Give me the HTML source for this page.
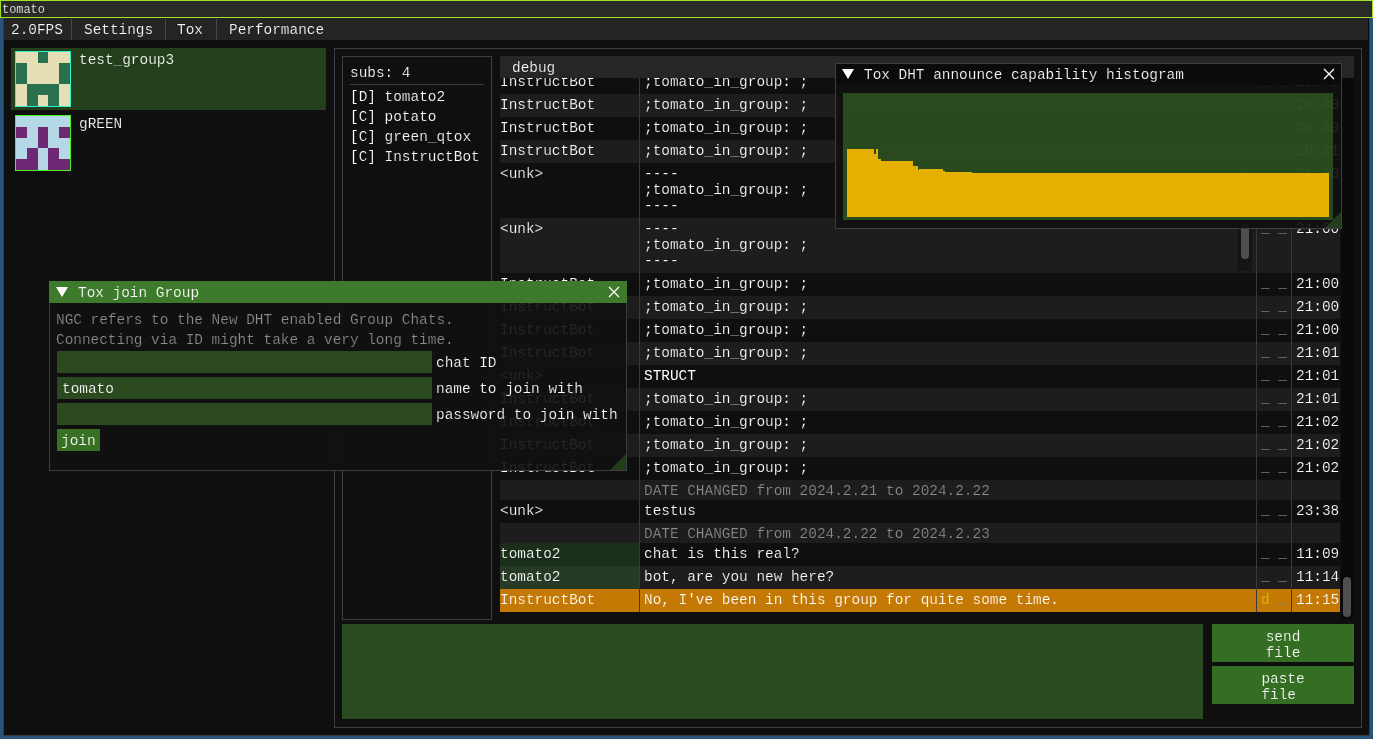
<!DOCTYPE html>
<html><head><meta charset="utf-8"><style>
html,body{margin:0;padding:0}
body{-webkit-font-smoothing:antialiased;width:1373px;height:739px;background:#275478;position:relative;overflow:hidden;font-family:"Liberation Mono",monospace;font-size:14.42px;line-height:16px;color:#ffffff}
.a{position:absolute}
.t{position:absolute;white-space:pre;will-change:transform}
.btn{background:#336e22;display:flex;align-items:center;justify-content:center;text-align:center;line-height:15.8px;box-sizing:border-box;padding-top:5px;will-change:transform}
</style></head><body>
<div class="a" style="left:0;top:0;width:1373px;height:18px;box-sizing:border-box;border:1px solid #9ee22b;background:#2a2a26"></div>
<div class="t" style="left:2px;top:1.5px;font-size:11.9px;line-height:16px;color:#f0f0f0;-webkit-text-stroke:0.16000000000000003px #2a2a26">tomato</div>
<div class="a" style="left:3px;top:18px;width:1367px;height:718px;background:#0f0f0f;box-sizing:border-box;border-left:1px solid #3a3a44;border-bottom:1px solid #3a3a44;border-right:1px solid #3a3a44"></div>
<div class="a" style="left:4px;top:18px;width:1364px;height:22px;background:#242424"></div>
<div class="a" style="left:71px;top:19px;width:1px;height:21px;background:#46464f"></div>
<div class="a" style="left:165px;top:19px;width:1px;height:21px;background:#46464f"></div>
<div class="a" style="left:216px;top:19px;width:1px;height:21px;background:#46464f"></div>
<div class="t" style="left:10.5px;top:21.66px;-webkit-text-stroke:0.2px #242424;">2.0FPS</div>
<div class="t" style="left:83.5px;top:21.66px;-webkit-text-stroke:0.2px #242424;">Settings</div>
<div class="t" style="left:177px;top:21.66px;-webkit-text-stroke:0.2px #242424;">Tox</div>
<div class="t" style="left:228.5px;top:21.66px;-webkit-text-stroke:0.2px #242424;">Performance</div>
<div class="a" style="left:11px;top:48px;width:315px;height:62px;background:#233f1b"></div>
<div class="a" style="left:15px;top:51px;width:54px;height:54px;border:1px solid #2ff0cc;background:#e6dfb3"></div>
<div class="a" style="left:38px;top:52px;width:10px;height:11px;background:#29704f"></div>
<div class="a" style="left:16px;top:63px;width:11px;height:11px;background:#29704f"></div>
<div class="a" style="left:59px;top:63px;width:11px;height:11px;background:#29704f"></div>
<div class="a" style="left:16px;top:74px;width:11px;height:10px;background:#29704f"></div>
<div class="a" style="left:59px;top:74px;width:11px;height:10px;background:#29704f"></div>
<div class="a" style="left:27px;top:84px;width:11px;height:11px;background:#29704f"></div>
<div class="a" style="left:38px;top:84px;width:10px;height:11px;background:#29704f"></div>
<div class="a" style="left:48px;top:84px;width:11px;height:11px;background:#29704f"></div>
<div class="a" style="left:27px;top:95px;width:11px;height:11px;background:#29704f"></div>
<div class="a" style="left:48px;top:95px;width:11px;height:11px;background:#29704f"></div>
<div class="a" style="left:15px;top:115px;width:54px;height:54px;border:1px solid #4ff01f;background:#b4d8e6"></div>
<div class="a" style="left:16px;top:127px;width:11px;height:11px;background:#6e2873"></div>
<div class="a" style="left:38px;top:127px;width:10px;height:11px;background:#6e2873"></div>
<div class="a" style="left:59px;top:127px;width:11px;height:11px;background:#6e2873"></div>
<div class="a" style="left:38px;top:138px;width:10px;height:10px;background:#6e2873"></div>
<div class="a" style="left:27px;top:148px;width:11px;height:11px;background:#6e2873"></div>
<div class="a" style="left:48px;top:148px;width:11px;height:11px;background:#6e2873"></div>
<div class="a" style="left:16px;top:159px;width:11px;height:11px;background:#6e2873"></div>
<div class="a" style="left:27px;top:159px;width:11px;height:11px;background:#6e2873"></div>
<div class="a" style="left:48px;top:159px;width:11px;height:11px;background:#6e2873"></div>
<div class="a" style="left:59px;top:159px;width:11px;height:11px;background:#6e2873"></div>
<div class="t" style="left:79.2px;top:52.16px;-webkit-text-stroke:0.2px #233f1b;">test_group3</div>
<div class="t" style="left:79px;top:116.16px;-webkit-text-stroke:0.2px #0f0f0f;">gREEN</div>
<div class="a" style="left:334px;top:48px;width:1026px;height:678px;border:1px solid #3d3d45"></div>
<div class="a" style="left:342px;top:56px;width:148px;height:562px;border:1px solid #3d3d45"></div>
<div class="t" style="left:350px;top:65.46px;-webkit-text-stroke:0.2px #0f0f0f;">subs: 4</div>
<div class="a" style="left:350px;top:84px;width:134px;height:1px;background:#3d3d45"></div>
<div class="t" style="left:350px;top:88.96px;-webkit-text-stroke:0.2px #0f0f0f;">[D] tomato2</div>
<div class="t" style="left:350px;top:108.96px;-webkit-text-stroke:0.2px #0f0f0f;">[C] potato</div>
<div class="t" style="left:350px;top:128.96px;-webkit-text-stroke:0.2px #0f0f0f;">[C] green_qtox</div>
<div class="t" style="left:350px;top:148.96px;-webkit-text-stroke:0.2px #0f0f0f;">[C] InstructBot</div>
<div class="a" style="left:500px;top:78px;width:841px;height:541px;overflow:hidden">
<div class="t" style="left:0px;top:-3.54px;-webkit-text-stroke:0.2px #0f0f0f;">InstructBot</div>
<div class="t" style="left:144px;top:-3.54px;-webkit-text-stroke:0.2px #0f0f0f;">;tomato_in_group: ;</div>
<div class="t" style="left:760.5px;top:-4.54px;color:#808080;">_ _</div>
<div class="t" style="left:795.5px;top:-3.54px;-webkit-text-stroke:0.2px #0f0f0f;">20:40</div>
<div class="a" style="left:0px;top:16px;width:840px;height:23px;background:#1d1d1d"></div>
<div class="t" style="left:0px;top:19.46px;-webkit-text-stroke:0.2px #1d1d1d;">InstructBot</div>
<div class="t" style="left:144px;top:19.46px;-webkit-text-stroke:0.2px #1d1d1d;">;tomato_in_group: ;</div>
<div class="t" style="left:760.5px;top:18.46px;color:#808080;">_ _</div>
<div class="t" style="left:795.5px;top:19.46px;-webkit-text-stroke:0.2px #1d1d1d;">20:40</div>
<div class="t" style="left:0px;top:42.46px;-webkit-text-stroke:0.2px #0f0f0f;">InstructBot</div>
<div class="t" style="left:144px;top:42.46px;-webkit-text-stroke:0.2px #0f0f0f;">;tomato_in_group: ;</div>
<div class="t" style="left:760.5px;top:41.46px;color:#808080;">_ _</div>
<div class="t" style="left:795.5px;top:42.46px;-webkit-text-stroke:0.2px #0f0f0f;">20:40</div>
<div class="a" style="left:0px;top:62px;width:840px;height:23px;background:#1d1d1d"></div>
<div class="t" style="left:0px;top:65.46px;-webkit-text-stroke:0.2px #1d1d1d;">InstructBot</div>
<div class="t" style="left:144px;top:65.46px;-webkit-text-stroke:0.2px #1d1d1d;">;tomato_in_group: ;</div>
<div class="t" style="left:760.5px;top:64.46px;color:#808080;">_ _</div>
<div class="t" style="left:795.5px;top:65.46px;-webkit-text-stroke:0.2px #1d1d1d;">20:41</div>
<div class="t" style="left:0px;top:88.46px;-webkit-text-stroke:0.2px #0f0f0f;">&lt;unk&gt;</div>
<div class="t" style="left:144px;top:88.46px;-webkit-text-stroke:0.2px #0f0f0f;">----</div>
<div class="t" style="left:144px;top:104.46px;-webkit-text-stroke:0.2px #0f0f0f;">;tomato_in_group: ;</div>
<div class="t" style="left:144px;top:120.46px;-webkit-text-stroke:0.2px #0f0f0f;">----</div>
<div class="t" style="left:760.5px;top:87.46px;color:#808080;">_ _</div>
<div class="t" style="left:795.5px;top:88.46px;-webkit-text-stroke:0.2px #0f0f0f;">21:00</div>
<div class="a" style="left:0px;top:140px;width:840px;height:55px;background:#1d1d1d"></div>
<div class="t" style="left:0px;top:143.46px;-webkit-text-stroke:0.2px #1d1d1d;">&lt;unk&gt;</div>
<div class="t" style="left:144px;top:143.46px;-webkit-text-stroke:0.2px #1d1d1d;">----</div>
<div class="t" style="left:144px;top:159.46px;-webkit-text-stroke:0.2px #1d1d1d;">;tomato_in_group: ;</div>
<div class="t" style="left:144px;top:175.46px;-webkit-text-stroke:0.2px #1d1d1d;">----</div>
<div class="t" style="left:760.5px;top:142.46px;color:#808080;">_ _</div>
<div class="t" style="left:795.5px;top:143.46px;-webkit-text-stroke:0.2px #1d1d1d;">21:00</div>
<div class="t" style="left:0px;top:198.46px;-webkit-text-stroke:0.2px #0f0f0f;">InstructBot</div>
<div class="t" style="left:144px;top:198.46px;-webkit-text-stroke:0.2px #0f0f0f;">;tomato_in_group: ;</div>
<div class="t" style="left:760.5px;top:197.46px;color:#808080;">_ _</div>
<div class="t" style="left:795.5px;top:198.46px;-webkit-text-stroke:0.2px #0f0f0f;">21:00</div>
<div class="a" style="left:0px;top:218px;width:840px;height:23px;background:#1d1d1d"></div>
<div class="t" style="left:0px;top:221.46px;-webkit-text-stroke:0.2px #1d1d1d;">InstructBot</div>
<div class="t" style="left:144px;top:221.46px;-webkit-text-stroke:0.2px #1d1d1d;">;tomato_in_group: ;</div>
<div class="t" style="left:760.5px;top:220.46px;color:#808080;">_ _</div>
<div class="t" style="left:795.5px;top:221.46px;-webkit-text-stroke:0.2px #1d1d1d;">21:00</div>
<div class="t" style="left:0px;top:244.46px;-webkit-text-stroke:0.2px #0f0f0f;">InstructBot</div>
<div class="t" style="left:144px;top:244.46px;-webkit-text-stroke:0.2px #0f0f0f;">;tomato_in_group: ;</div>
<div class="t" style="left:760.5px;top:243.46px;color:#808080;">_ _</div>
<div class="t" style="left:795.5px;top:244.46px;-webkit-text-stroke:0.2px #0f0f0f;">21:00</div>
<div class="a" style="left:0px;top:264px;width:840px;height:23px;background:#1d1d1d"></div>
<div class="t" style="left:0px;top:267.46px;-webkit-text-stroke:0.2px #1d1d1d;">InstructBot</div>
<div class="t" style="left:144px;top:267.46px;-webkit-text-stroke:0.2px #1d1d1d;">;tomato_in_group: ;</div>
<div class="t" style="left:760.5px;top:266.46px;color:#808080;">_ _</div>
<div class="t" style="left:795.5px;top:267.46px;-webkit-text-stroke:0.2px #1d1d1d;">21:01</div>
<div class="t" style="left:0px;top:290.46px;-webkit-text-stroke:0.2px #0f0f0f;">&lt;unk&gt;</div>
<div class="t" style="left:144px;top:290.46px;font-family:"Liberation Sans",sans-serif;font-size:14px;">STRUCT</div>
<div class="t" style="left:760.5px;top:289.46px;color:#808080;">_ _</div>
<div class="t" style="left:795.5px;top:290.46px;-webkit-text-stroke:0.2px #0f0f0f;">21:01</div>
<div class="a" style="left:0px;top:310px;width:840px;height:23px;background:#1d1d1d"></div>
<div class="t" style="left:0px;top:313.46px;-webkit-text-stroke:0.2px #1d1d1d;">InstructBot</div>
<div class="t" style="left:144px;top:313.46px;-webkit-text-stroke:0.2px #1d1d1d;">;tomato_in_group: ;</div>
<div class="t" style="left:760.5px;top:312.46px;color:#808080;">_ _</div>
<div class="t" style="left:795.5px;top:313.46px;-webkit-text-stroke:0.2px #1d1d1d;">21:01</div>
<div class="t" style="left:0px;top:336.46px;-webkit-text-stroke:0.2px #0f0f0f;">InstructBot</div>
<div class="t" style="left:144px;top:336.46px;-webkit-text-stroke:0.2px #0f0f0f;">;tomato_in_group: ;</div>
<div class="t" style="left:760.5px;top:335.46px;color:#808080;">_ _</div>
<div class="t" style="left:795.5px;top:336.46px;-webkit-text-stroke:0.2px #0f0f0f;">21:02</div>
<div class="a" style="left:0px;top:356px;width:840px;height:23px;background:#1d1d1d"></div>
<div class="t" style="left:0px;top:359.46px;-webkit-text-stroke:0.2px #1d1d1d;">InstructBot</div>
<div class="t" style="left:144px;top:359.46px;-webkit-text-stroke:0.2px #1d1d1d;">;tomato_in_group: ;</div>
<div class="t" style="left:760.5px;top:358.46px;color:#808080;">_ _</div>
<div class="t" style="left:795.5px;top:359.46px;-webkit-text-stroke:0.2px #1d1d1d;">21:02</div>
<div class="t" style="left:0px;top:382.46px;-webkit-text-stroke:0.2px #0f0f0f;">InstructBot</div>
<div class="t" style="left:144px;top:382.46px;-webkit-text-stroke:0.2px #0f0f0f;">;tomato_in_group: ;</div>
<div class="t" style="left:760.5px;top:381.46px;color:#808080;">_ _</div>
<div class="t" style="left:795.5px;top:382.46px;-webkit-text-stroke:0.2px #0f0f0f;">21:02</div>
<div class="a" style="left:0px;top:402px;width:840px;height:20px;background:#1d1d1d"></div>
<div class="t" style="left:144px;top:404.96px;color:#8c8c8c;-webkit-text-stroke:0.2px #1d1d1d;">DATE CHANGED from 2024.2.21 to 2024.2.22</div>
<div class="t" style="left:0px;top:425.46px;-webkit-text-stroke:0.2px #0f0f0f;">&lt;unk&gt;</div>
<div class="t" style="left:144px;top:425.46px;-webkit-text-stroke:0.2px #0f0f0f;">testus</div>
<div class="t" style="left:760.5px;top:424.46px;color:#808080;">_ _</div>
<div class="t" style="left:795.5px;top:425.46px;-webkit-text-stroke:0.2px #0f0f0f;">23:38</div>
<div class="a" style="left:0px;top:445px;width:840px;height:20px;background:#1d1d1d"></div>
<div class="t" style="left:144px;top:447.96px;color:#8c8c8c;-webkit-text-stroke:0.2px #1d1d1d;">DATE CHANGED from 2024.2.22 to 2024.2.23</div>
<div class="a" style="left:0px;top:465px;width:139px;height:23px;background:#1a2e1a"></div>
<div class="t" style="left:0px;top:468.46px;-webkit-text-stroke:0.2px #1a2e1a;">tomato2</div>
<div class="t" style="left:144px;top:468.46px;-webkit-text-stroke:0.2px #0f0f0f;">chat is this real?</div>
<div class="t" style="left:760.5px;top:467.46px;color:#808080;">_ _</div>
<div class="t" style="left:795.5px;top:468.46px;-webkit-text-stroke:0.2px #0f0f0f;">11:09</div>
<div class="a" style="left:0px;top:488px;width:840px;height:23px;background:#1d1d1d"></div>
<div class="a" style="left:0px;top:488px;width:139px;height:23px;background:#263a26"></div>
<div class="t" style="left:0px;top:491.46px;-webkit-text-stroke:0.2px #263a26;">tomato2</div>
<div class="t" style="left:144px;top:491.46px;-webkit-text-stroke:0.2px #1d1d1d;">bot, are you new here?</div>
<div class="t" style="left:760.5px;top:490.46px;color:#808080;">_ _</div>
<div class="t" style="left:795.5px;top:491.46px;-webkit-text-stroke:0.2px #1d1d1d;">11:14</div>
<div class="a" style="left:0px;top:511px;width:840px;height:23px;background:#c47904"></div>
<div class="t" style="left:0px;top:514.46px;-webkit-text-stroke:0.2px #c47904;">InstructBot</div>
<div class="t" style="left:144px;top:514.46px;-webkit-text-stroke:0.2px #c47904;">No, I've been in this group for quite some time.</div>
<div class="t" style="left:760.5px;top:514.46px;color:#d8c000;-webkit-text-stroke:0.2px #c47904;">d</div>
<div class="t" style="left:777.8px;top:513.46px;color:#808080;">_</div>
<div class="t" style="left:795.5px;top:514.46px;-webkit-text-stroke:0.2px #c47904;">11:15</div>
<div class="a" style="left:738px;top:85px;width:14px;height:53px;background:#141414"></div>
<div class="a" style="left:741px;top:90px;width:8px;height:36px;background:#4f4f4f;border-radius:4px"></div>
<div class="a" style="left:738px;top:140px;width:14px;height:53px;background:#141414"></div>
<div class="a" style="left:741px;top:145px;width:8px;height:36px;background:#4f4f4f;border-radius:4px"></div>
<div class="a" style="left:139px;top:0px;width:1px;height:534px;background:#3a3a3a"></div>
<div class="a" style="left:756px;top:0px;width:1px;height:534px;background:#3a3a3a"></div>
<div class="a" style="left:791px;top:0px;width:1px;height:534px;background:#3a3a3a"></div>
</div>
<div class="a" style="left:500px;top:56px;width:854px;height:21.5px;background:#262626"></div>
<div class="t" style="left:512px;top:60.36px;-webkit-text-stroke:0.2px #262626;">debug</div>
<div class="a" style="left:1341px;top:78px;width:13px;height:541px;background:#0a0a0a"></div>
<div class="a" style="left:1343px;top:577px;width:8px;height:40px;background:#4f4f4f;border-radius:4px"></div>
<div class="a" style="left:342px;top:624px;width:861px;height:95px;background:#2a4a20"></div>
<div class="a btn" style="left:1212px;top:624px;width:142px;height:38px;-webkit-text-stroke:0.2px #336e22"><span style="display:inline-block;text-align:left">send<br>file</span></div>
<div class="a btn" style="left:1212px;top:666px;width:142px;height:38px;-webkit-text-stroke:0.2px #336e22"><span style="display:inline-block;text-align:left">paste<br>file</span></div>
<div class="a" style="left:835px;top:63px;width:505px;height:164px;border:1px solid #3d3d45;background:rgba(17,17,17,0.91)"></div>
<div class="a" style="left:836px;top:64px;width:505px;height:21px;background:#0b0b0b"></div>
<svg class="a" style="left:842px;top:69px" width="12" height="10"><path d="M0 0L12 0L6.0 10Z" fill="#fff"/></svg>
<div class="t" style="left:863.5px;top:67.26px;-webkit-text-stroke:0.2px #0b0b0b;">Tox DHT announce capability histogram</div>
<svg class="a" style="left:1323px;top:68px" width="12" height="12"><path d="M1 1L11 11M11 1L1 11" stroke="#fff" stroke-width="1.3"/></svg>
<div class="a" style="left:843px;top:93px;width:490px;height:127px;background:rgba(57,112,40,0.6)"></div>
<div class="a" style="left:847px;top:149px;width:27px;height:68px;background:#e6b000"></div>
<div class="a" style="left:874px;top:154px;width:2px;height:63px;background:#e6b000"></div>
<div class="a" style="left:876px;top:149px;width:2px;height:68px;background:#e6b000"></div>
<div class="a" style="left:878px;top:159px;width:3px;height:58px;background:#e6b000"></div>
<div class="a" style="left:881px;top:161px;width:32px;height:56px;background:#e6b000"></div>
<div class="a" style="left:913px;top:166px;width:5px;height:51px;background:#e6b000"></div>
<div class="a" style="left:918px;top:169.5px;width:1px;height:47.5px;background:#e6b000"></div>
<div class="a" style="left:919px;top:168.6px;width:24px;height:48.400000000000006px;background:#e6b000"></div>
<div class="a" style="left:943px;top:171px;width:2px;height:46px;background:#e6b000"></div>
<div class="a" style="left:945px;top:172px;width:27px;height:45px;background:#e6b000"></div>
<div class="a" style="left:972px;top:173px;width:357px;height:44px;background:#e6b000"></div>
<svg class="a" style="left:1325px;top:212px" width="16" height="16"><path d="M16 0L16 16L0 16Z" fill="rgba(38,72,28,0.8)"/></svg>
<div class="a" style="left:49px;top:281px;width:576px;height:188px;border:1px solid #3d3d45;background:rgba(17,17,17,0.91)"></div>
<div class="a" style="left:49px;top:281px;width:578px;height:22px;background:#3d7a2b"></div>
<svg class="a" style="left:56px;top:287px" width="12" height="10"><path d="M0 0L12 0L6.0 10Z" fill="#fff"/></svg>
<div class="t" style="left:78px;top:285.36px;-webkit-text-stroke:0.2px #3d7a2b;">Tox join Group</div>
<svg class="a" style="left:608px;top:286px" width="12" height="12"><path d="M1 1L11 11M11 1L1 11" stroke="#fff" stroke-width="1.3"/></svg>
<div class="t" style="left:56.2px;top:311.96px;color:#8c8c8c;-webkit-text-stroke:0.2px #111111;">NGC refers to the New DHT enabled Group Chats.</div>
<div class="t" style="left:56.2px;top:332.16px;color:#8c8c8c;-webkit-text-stroke:0.2px #111111;">Connecting via ID might take a very long time.</div>
<div class="a" style="left:57px;top:351px;width:375px;height:22px;background:#2b4a20"></div>
<div class="t" style="left:436px;top:354.66px;-webkit-text-stroke:0.2px #111111;">chat ID</div>
<div class="a" style="left:57px;top:377px;width:375px;height:22px;background:#2b4a20"></div>
<div class="t" style="left:62px;top:380.66px;-webkit-text-stroke:0.2px #2b4a20;">tomato</div>
<div class="t" style="left:436px;top:380.66px;-webkit-text-stroke:0.2px #111111;">name to join with</div>
<div class="a" style="left:57px;top:403px;width:375px;height:22px;background:#2b4a20"></div>
<div class="t" style="left:436px;top:406.66px;-webkit-text-stroke:0.2px #111111;">password to join with</div>
<div class="a" style="left:57px;top:429px;width:43px;height:22px;background:#387024"></div>
<div class="t" style="left:61px;top:433.26px;-webkit-text-stroke:0.2px #387024;">join</div>
<svg class="a" style="left:610px;top:454px" width="16" height="16"><path d="M16 0L16 16L0 16Z" fill="rgba(38,72,28,0.8)"/></svg>
</body></html>
